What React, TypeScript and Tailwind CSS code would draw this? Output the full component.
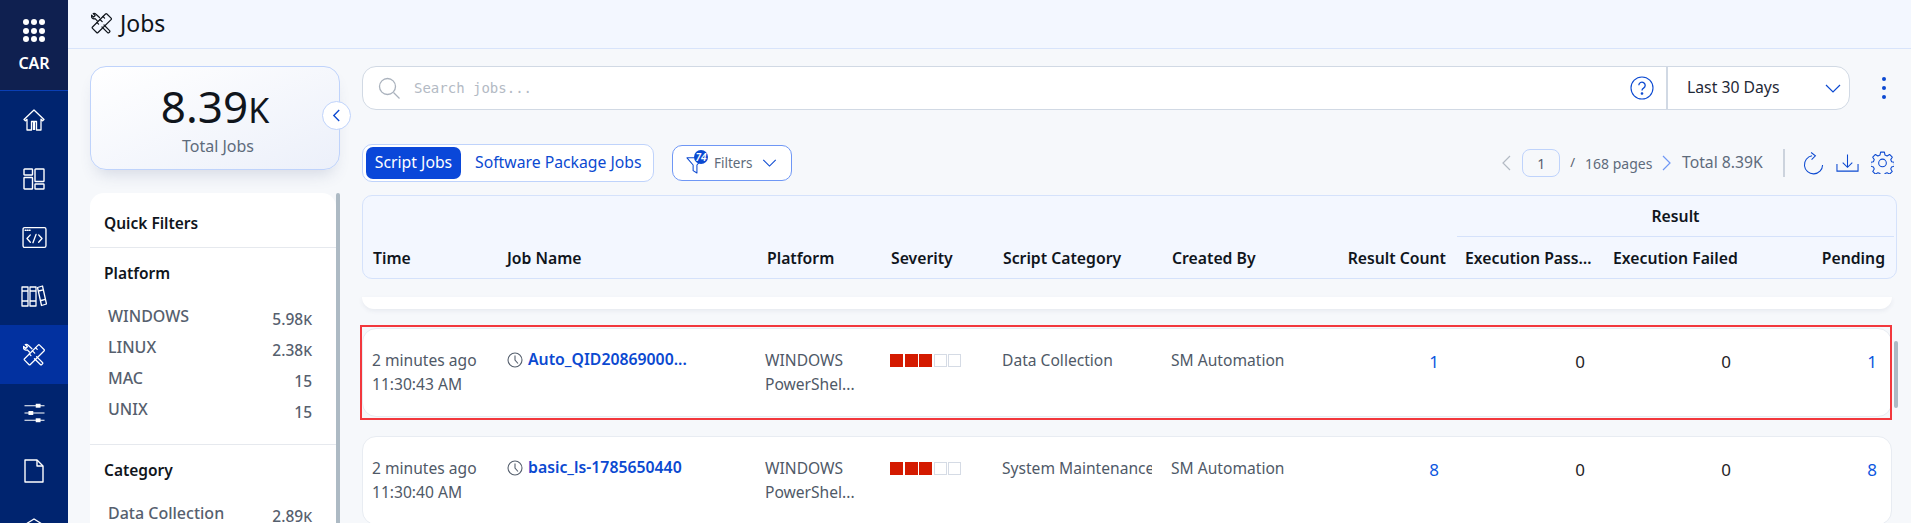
import React from "react";

const RulerWrench = ({ className, stroke }: { className?: string; stroke: string }) => (
  <svg viewBox="1 1 22 22" fill="none" stroke={stroke} strokeWidth="1.200" strokeLinejoin="round" strokeLinecap="round" className={className}>
    <path d="M2.500 16 15.500 3a1 1 0 0 1 1.400 0l4.200 4.200a1 1 0 0 1 0 1.400L8 21.500a1 1 0 0 1-1.400 0L2.500 17.400a1 1 0 0 1 0-1.400Z" />
    <path d="M7 11.500l1.600 1.600M10 8.500l2.200 2.200M13 5.500l1.600 1.600" />
    <path d="M9.500 6.500 6 3.200c-.7-.7-1.800-1-2.800-.6l2 2-1.600 1.600-2-2c-.4 1 0 2.100.6 2.800.8.8 1.900 1 2.900.6l2.200 2.200" />
    <path d="M14 14l5.600 5.600a1 1 0 0 1 0 1.400l-.6.600a1 1 0 0 1-1.400 0L12 16" />
  </svg>
);

const Rail = ({ active, children }: { active?: boolean; children: React.ReactNode }) => (
  <div className={`h-[58.5px] flex items-center justify-center shrink-0 ${active ? "bg-[#0231a0]" : ""}`}>{children}</div>
);

const Sidebar = () => (
  <aside className="w-[68px] h-[523px] shrink-0 bg-[#00246f] overflow-hidden flex flex-col">
    <div className="h-[91px] shrink-0 bg-[#0f2050] border-b border-[#0a3fb5] flex flex-col items-center pt-[19px]">
      <div className="grid grid-cols-3 gap-x-[2.500px] gap-y-[2.500px] w-[22px]">
        {Array.from({ length: 9 }).map((_, i) => (
          <span key={i} className="w-[6px] h-[6px] rounded-full bg-white" />
        ))}
      </div>
      <div className="mt-[11px] text-[16px] leading-[20px] font-semibold text-white">CAR</div>
    </div>
    <Rail>
      <svg viewBox="0 0 24 24" className="w-[24px] h-[24px]" fill="none" stroke="white" strokeWidth="1.300" strokeLinejoin="round">
        <path d="M2 11.500 12 2l10 9.500-1.400 1.300L19 11.300V22h-4.500v-8.500h-5V22H5V11.300l-1.600 1.500Z" />
        <path d="M11.500 13.500v8.500M12.500 13.500v8.500" />
      </svg>
    </Rail>
    <Rail>
      <svg viewBox="0 0 24 24" className="w-[24px] h-[24px]" fill="none" stroke="white" strokeWidth="1.400">
        <rect x="2" y="2" width="8.500" height="6" rx=".6" />
        <rect x="2" y="10.500" width="8.500" height="11.500" rx=".6" />
        <rect x="13" y="2" width="9" height="12.500" rx=".6" />
        <rect x="13" y="17" width="9" height="5" rx=".6" />
      </svg>
    </Rail>
    <Rail>
      <svg viewBox="0 0 24 22" className="w-[25px] h-[23px]" fill="none" stroke="white" strokeWidth="1.300" strokeLinecap="round" strokeLinejoin="round">
        <rect x="1" y="1.500" width="22" height="19" rx="1.500" />
        <path d="M3 4h.8M5 4h.8M7 4h.8" />
        <path d="M8 8.500 4.800 12 8 15.500M16 8.500l3.200 3.500-3.200 3.500M13.500 8l-3 8" />
      </svg>
    </Rail>
    <Rail>
      <svg viewBox="0 0 26 22" className="w-[26px] h-[22px]" fill="none" stroke="white" strokeWidth="1.300" strokeLinejoin="round">
        <rect x="1" y="2" width="6" height="19" />
        <rect x="9" y="2" width="6" height="19" />
        <path d="m16.500 2.500 5-1.500 4 18-5 1.500Z" />
        <path d="M1 6h6M1 16h6M9 6h6M9 16h6M17.500 6l5-1.200M20 15.500l4.500-1.200" />
      </svg>
    </Rail>
    <Rail active>
      <RulerWrench className="w-[23px] h-[23px]" stroke="white" />
    </Rail>
    <Rail>
      <svg viewBox="0 0 24 22" className="w-[23px] h-[20px]" fill="none" stroke="white" strokeWidth="1.300">
        <path d="M1 3h22M1 11h22M1 19h22" />
        <rect x="14" y="1.500" width="4" height="3" fill="white" />
        <rect x="6" y="9.500" width="4" height="3" fill="white" />
        <rect x="14" y="17.500" width="4" height="3" fill="white" />
      </svg>
    </Rail>
    <Rail>
      <svg viewBox="0 0 20 24" className="w-[20px] h-[24px]" fill="none" stroke="white" strokeWidth="1.400" strokeLinejoin="round">
        <path d="M1 1h12l6 6v16H1Z" />
        <path d="M13 1v6h6" />
      </svg>
    </Rail>
    <Rail>
      <svg viewBox="0 0 24 24" className="w-[24px] h-[24px]" fill="none" stroke="white" strokeWidth="1.300">
        <path d="M12 1 4 6v8l8 5 8-5V6Z" />
      </svg>
    </Rail>
  </aside>
);

const Stat = ({ label, value, unit }: { label: string; value: string; unit?: boolean }) => (
  <div className="flex items-start justify-between h-[31px] text-[#56606e] font-medium">
    <span className="text-[16px] leading-[20px]">{label}</span>
    <span className="text-[15.500px] leading-[20px] mt-[3px]">
      {value}
      {unit && <span className="text-[14px]">K</span>}
    </span>
  </div>
);

const LeftPanel = () => (
  <div className="w-[250px] shrink-0 mt-[17px] flex flex-col">
    <div className="relative h-[105px] rounded-[16px] border border-[#bfd3fb] bg-gradient-to-br from-white to-[#ecf0fa] shadow-[0_10px_16px_-6px_rgba(60,80,120,0.18)] flex flex-col items-center pt-[14px]">
      <div className="text-[#10151c] leading-[50px] h-[50px]">
        <span className="text-[44px]">8.39</span>
        <span className="text-[34px]">K</span>
      </div>
      <div className="text-[16px] leading-[20px] mt-[5px] ml-[6px] text-[#5e6b7b]">Total Jobs</div>
      <button className="absolute -right-[12px] top-[34px] w-[29px] h-[29px] rounded-full bg-white border border-[#bfd3fb] flex items-center justify-center">
        <svg viewBox="0 0 10 14" className="w-[9px] h-[13px]" fill="none" stroke="#0b49d1" strokeWidth="1.500">
          <path d="M8 1 2 7l6 6" />
        </svg>
      </button>
    </div>
    <div className="mt-[23px] h-[330px] flex">
      <div className="w-[246px] bg-white rounded-t-[14px] overflow-hidden">
        <div className="h-[55px] border-b border-[#e6e9ee] pl-[14px] pt-[20px] text-[15.500px] leading-[20px] font-semibold text-[#10151c]">Quick Filters</div>
        <div className="h-[197px] border-b border-[#e6e9ee] pl-[14px] pr-[24px] pt-[15px]">
          <div className="text-[15.500px] leading-[20px] font-semibold text-[#10151c]">Platform</div>
          <div className="mt-[23px] pl-[4px]">
            <Stat label="WINDOWS" value="5.98" unit />
            <Stat label="LINUX" value="2.38" unit />
            <Stat label="MAC" value="15" />
            <Stat label="UNIX" value="15" />
          </div>
        </div>
        <div className="pl-[14px] pr-[24px] pt-[15px]">
          <div className="text-[15.500px] leading-[20px] font-semibold text-[#10151c]">Category</div>
          <div className="mt-[23px] pl-[4px]">
            <Stat label="Data Collection" value="2.89" unit />
          </div>
        </div>
      </div>
      <div className="w-[4px] bg-[#adbac4] rounded-t-[2px]" />
    </div>
  </div>
);

const Chevron = ({ className, color = "#0b49d1" }: { className?: string; color?: string }) => (
  <svg viewBox="0 0 16 9" className={className} fill="none" stroke={color} strokeWidth="1.200">
    <path d="m1 1 7 7 7-7" />
  </svg>
);

const SearchRow = () => (
  <div className="flex items-center">
    <div className="w-[1488px] h-[44px] flex items-center bg-white border border-[#d1d9e4] rounded-[14px]">
      <svg viewBox="0 0 22 22" className="w-[22px] h-[22px] ml-[15px]" fill="none" stroke="#aab2bd" strokeWidth="1.300">
        <circle cx="9.500" cy="9.500" r="8" />
        <path d="m15.500 15.500 6 6" />
      </svg>
      <span className="ml-[14px] font-['DejaVu_Sans_Mono'] text-[14px] text-[#b3bac4] flex-1">Search jobs...</span>
      <svg viewBox="0 0 24 24" className="w-[24px] h-[24px] mr-[12px]" fill="none" stroke="#0b49d1" strokeWidth="1.100">
        <circle cx="12" cy="12" r="11" />
        <path d="M8.800 9.300a3.200 3.200 0 1 1 4.800 2.800c-1 .6-1.600 1.200-1.600 2.400" strokeWidth="1.300" />
        <circle cx="12" cy="17.500" r=".8" fill="#0b49d1" />
      </svg>
      <div className="w-[2px] h-[42px] bg-[#d1d9e4]" />
      <div className="w-[181px] flex items-center pl-[19px] pr-[8px]">
        <span className="text-[15.750px] text-[#1f2937] flex-1">Last 30 Days</span>
        <Chevron className="w-[16px] h-[9px]" />
      </div>
    </div>
    <div className="ml-[32px] flex flex-col gap-[5px] items-center">
      <span className="w-[4px] h-[4px] rounded-full bg-[#0b49d1]" />
      <span className="w-[4px] h-[4px] rounded-full bg-[#0b49d1]" />
      <span className="w-[4px] h-[4px] rounded-full bg-[#0b49d1]" />
    </div>
  </div>
);

const Toolbar = () => (
  <div className="mt-[34px] h-[38px] flex items-center">
    <div className="w-[292px] h-[38px] rounded-[10px] border border-[#bfd3fb] bg-white flex items-center pl-[3px]">
      <div className="w-[95px] h-[32px] rounded-[7px] bg-[#0a47d9] text-white text-[15.750px] flex items-center justify-center">Script Jobs</div>
      <div className="ml-[14px] text-[15.750px] text-[#0b49d1] whitespace-nowrap">Software Package Jobs</div>
    </div>
    <div className="ml-[18px] w-[120px] h-[36px] rounded-[10px] border border-[#6f97f5] bg-white flex items-center pl-[13px]">
      <div className="relative w-[22px] h-[22px]">
        <svg viewBox="0 0 20 20" className="absolute left-0 top-[3px] w-[19px] h-[19px]" fill="none" stroke="#0b49d1" strokeWidth="1.100" strokeLinejoin="round">
          <path d="M1 3h17l-6.500 7.500V19l-4-2.500v-6Z" />
        </svg>
        <span className="absolute left-[8px] -top-[2px] w-[14px] h-[14px] rounded-full bg-[#0b49d1] text-white text-[10px] leading-[14px] text-center font-semibold italic">74</span>
      </div>
      <span className="ml-[6px] text-[13.500px] text-[#5e6b7b]">Filters</span>
      <Chevron className="ml-[9px] w-[15px] h-[8px]" />
    </div>
    <div className="ml-auto flex items-center justify-end h-[28px] mr-[17px]">
      <svg viewBox="0 0 9 16" className="w-[9px] h-[16px]" fill="none" stroke="#b3bac4" strokeWidth="1.200"><path d="M8 1 1 8l7 7" /></svg>
      <div className="ml-[11px] w-[38px] h-[28px] rounded-[8px] border border-[#bfd3fb] text-[14px] text-[#56606e] flex items-center justify-center">1</div>
      <span className="ml-[10px] text-[13px] text-[#56606e]">/</span>
      <span className="ml-[10px] text-[14px] text-[#5e6b7b] w-[67px] whitespace-nowrap">168 pages</span>
      <svg viewBox="0 0 9 16" className="ml-[10px] w-[9px] h-[16px]" fill="none" stroke="#6f97f5" strokeWidth="1.200"><path d="m1 1 7 7-7 7" /></svg>
      <span className="ml-[11px] text-[15.750px] text-[#5e6b7b] w-[82px] whitespace-nowrap">Total 8.39K</span>
      <div className="ml-[19px] w-[2px] h-[28px] bg-[#ccd3dd]" />
      <svg viewBox="0 0 22 24" className="ml-[18px] w-[21px] h-[24px]" fill="none" stroke="#0b49d1" strokeWidth="1.100">
        <path d="M9.500 4.500A9.500 9.500 0 1 0 20.500 14" />
        <path d="m8.500 1 4.500 3.500-4 4" />
      </svg>
      <svg viewBox="0 0 24 20" className="ml-[12px] w-[23px] h-[20px]" fill="none" stroke="#0b49d1" strokeWidth="1.100">
        <path d="M1 11v7.500h22V11" />
        <path d="M12 1v13M7 9.500l5 5 5-5" />
      </svg>
      <svg viewBox="0 0 24 24" className="ml-[12px] w-[23px] h-[23px] -mt-[2px]" fill="none" stroke="#0b49d1" strokeWidth="1.100" strokeLinejoin="round">
        <path d="m10 1.200h4l.6 3 2.200 1 2.600-1.600 2.800 2.900-1.600 2.500.9 2.200 2.900.7v4l-2.900.7-.9 2.200 1.600 2.500-2.800 2.900-2.600-1.600-2.200.9-.6 2.300h-4l-.6-2.300-2.200-.9-2.600 1.600-2.800-2.900 1.600-2.500-.9-2.200-2.900-.7v-4l2.900-.7.9-2.200-1.600-2.500 2.800-2.900 2.600 1.600 2.200-1Z" />
        <circle cx="12" cy="12.500" r="4" />
      </svg>
    </div>
  </div>
);

const TH = "text-[15.750px] leading-[20px] font-semibold text-[#10151c] whitespace-nowrap";

const TableHead = () => (
  <div className="mt-[13px] w-[1535px] h-[84px] rounded-[10px] border border-[#d5e2fb] bg-[#f3f7ff] flex flex-col pl-[10px] pr-[2px]">
    <div className="h-[41px] ml-[1084px] border-b border-[#d5e2fb] flex items-center justify-center">
      <span className={TH}>Result</span>
    </div>
    <div className="flex items-center h-[41px]">
      <span className={`${TH} w-[134px]`}>Time</span>
      <span className={`${TH} w-[260px]`}>Job Name</span>
      <span className={`${TH} w-[124px]`}>Platform</span>
      <span className={`${TH} w-[112px]`}>Severity</span>
      <span className={`${TH} w-[169px]`}>Script Category</span>
      <span className={`${TH} w-[120px]`}>Created By</span>
      <span className={`${TH} w-[154px] text-right`}>Result Count</span>
      <span className={`${TH} ml-[19px] w-[129px] truncate`}>Execution Passed</span>
      <span className={`${TH} ml-[19px] w-[127px]`}>Execution Failed</span>
      <span className={`${TH} w-[145px] text-right`}>Pending</span>
    </div>
  </div>
);

const Row = ({ time, name, category, count, highlight }: { time: string; name: string; category: string; count: string; highlight?: boolean }) => (
  <div className="relative shrink-0 w-[1530px] h-[89px] rounded-[14px] bg-white border border-[#e8ecf2] flex pl-[9px] pt-[19px]">
    {highlight && <div className="absolute -left-[3px] -top-[4px] -right-[1px] -bottom-[4px] border-2 border-[#f2383d] pointer-events-none" />}
    <div className="w-[135px] text-[15.600px] leading-[24px] text-[#4f5967]">
      <div>2 minutes ago</div>
      <div>{time}</div>
    </div>
    <div className="w-[258px] h-[24px] flex items-center">
      <svg viewBox="0 0 16 16" className="w-[16px] h-[16px] shrink-0" fill="none" stroke="#56606e" strokeWidth="1.100">
        <circle cx="8" cy="8" r="7" />
        <path d="M8 3.500V8l3 3.500" />
      </svg>
      <span className="ml-[5px] text-[15.800px] font-semibold text-[#0b49d1] whitespace-nowrap">{name}</span>
    </div>
    <div className="w-[125px] text-[15.600px] leading-[24px] text-[#4f5967]">
      <div>WINDOWS</div>
      <div>PowerShel...</div>
    </div>
    <div className="w-[112px] pt-[6px] flex gap-[1.500px] items-start">
      {[0, 1, 2].map((i) => <span key={i} className="w-[13px] h-[13px] bg-[#d41a00]" />)}
      {[0, 1].map((i) => <span key={i} className="w-[13px] h-[13px] border border-[#d5dbe5]" />)}
    </div>
    <div className="w-[150px] mr-[19px] text-[15.600px] leading-[24px] text-[#4f5967] whitespace-nowrap overflow-hidden">{category}</div>
    <div className="w-[120px] text-[15.600px] leading-[24px] text-[#4f5967] whitespace-nowrap">SM Automation</div>
    <div className="w-[148px] text-right text-[17px] leading-[28px] text-[#0b56e0]">{count}</div>
    <div className="w-[146px] text-right text-[17px] leading-[28px] text-[#1f2328]">0</div>
    <div className="w-[146px] text-right text-[17px] leading-[28px] text-[#1f2328]">0</div>
    <div className="w-[146px] text-right text-[17px] leading-[28px] text-[#0b56e0]">{count}</div>
  </div>
);

export default function App() {
  return (
    <div className="relative w-[1911px] h-[523px] overflow-hidden flex bg-[#f6f8fb] font-['Noto_Sans',sans-serif]">
      <Sidebar />
      <div className="flex-1 min-w-0 flex flex-col">
        <header className="h-[49px] shrink-0 bg-[#f3f7ff] border-b border-[#d8e4fb] flex items-center pl-[23px] pb-[2px]">
          <RulerWrench className="w-[22px] h-[22px]" stroke="#10151c" />
          <h1 className="ml-[7px] text-[23px] leading-[30px] text-[#10151c] font-normal">Jobs</h1>
        </header>
        <div className="flex-1 min-h-0 flex pl-[22px]">
          <LeftPanel />
          <main className="ml-[22px] flex-1 min-w-0 pt-[17px] flex flex-col">
            <SearchRow />
            <Toolbar />
            <TableHead />
            <div className="relative mt-[18px] flex-1 min-h-0 flex flex-col gap-[19px]">
              <div className="shrink-0 w-[1530px] h-[12px] rounded-b-[14px] bg-white shadow-[0_2px_4px_rgba(60,80,120,0.08)]" />
              <Row time="11:30:43 AM" name="Auto_QID20869000..." category="Data Collection" count="1" highlight />
              <Row time="11:30:40 AM" name="basic_ls-1785650440" category="System Maintenance" count="8" />
              <div className="absolute left-[1532px] top-[44px] w-[4px] h-[67px] rounded-[2px] bg-[#adbac4]" />
            </div>
          </main>
        </div>
      </div>
    </div>
  );
}
